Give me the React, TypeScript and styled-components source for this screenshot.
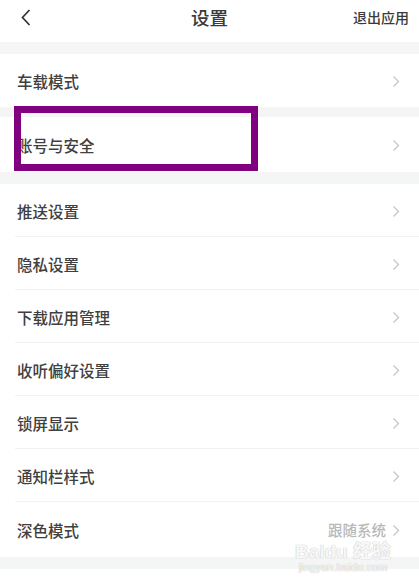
import React from 'react'
import styled, { createGlobalStyle } from 'styled-components'

const GlobalStyle = createGlobalStyle`
  html, body {
    margin: 0;
    padding: 0;
    background: #ffffff;
  }
  body {
    font-family: "Noto Sans CJK SC", "Noto Sans", sans-serif;
  }
`

const Page = styled.div`
  position: relative;
  width: 419px;
  height: 582px;
  overflow: hidden;
  background: #ffffff;
  display: flex;
  flex-direction: column;
`

const Header = styled.header`
  height: 42px;
  flex: none;
  box-sizing: border-box;
  display: flex;
  align-items: center;
  justify-content: space-between;
  padding: 0 10px 8px 21px;
  position: relative;
`

const Title = styled.h1`
  position: absolute;
  left: 0;
  right: 0;
  margin: 0;
  text-align: center;
  font-size: 18.5px;
  font-weight: 500;
  color: #3a3a3a;
  pointer-events: none;
`

const HeaderAction = styled.span`
  font-size: 14px;
  font-weight: 500;
  color: #3a3a3a;
`

const Band = styled.div<{ $h: number }>`
  flex: none;
  height: ${(p) => p.$h}px;
  background: #f4f5f5;
`

const Row = styled.div<{ $h: number; $divider?: boolean }>`
  position: relative;
  flex: none;
  height: ${(p) => p.$h}px;
  box-sizing: border-box;
  display: flex;
  align-items: center;
  padding: 1px 19px 0 17px;
  background: #ffffff;

  &::after {
    content: '';
    display: ${(p) => (p.$divider ? 'block' : 'none')};
    position: absolute;
    left: 15px;
    right: 0;
    bottom: 0;
    height: 1px;
    background: #f2f2f2;
  }
`

const Label = styled.span`
  flex: 1;
  font-size: 15.5px;
  font-weight: 500;
  color: #404040;
`

const Value = styled.span`
  font-size: 14.5px;
  line-height: 1;
  font-weight: 500;
  color: #b8b8b8;
  margin-right: 6px;
`

const Highlight = styled.div`
  position: absolute;
  left: 14px;
  top: -11px;
  width: 244px;
  height: 65px;
  box-sizing: border-box;
  border: 7px solid #800080;
  pointer-events: none;
`

const Watermark = styled.div`
  position: absolute;
  right: 28px;
  bottom: 9px;
  display: flex;
  flex-direction: column;
  align-items: center;
  color: rgba(255, 255, 255, 0.9);
  text-shadow: 0 0 1px #c4c4c4, 0 0 1px #c4c4c4;
  font-family: "Liberation Sans", "Noto Sans CJK SC", sans-serif;
  pointer-events: none;
`

const WatermarkBrand = styled.span`
  font-size: 19px;
  font-weight: 700;
  line-height: 18px;
`

const WatermarkUrl = styled.span`
  font-size: 11px;
  line-height: 12px;
`

const Chevron = () => (
  <svg width="8" height="13" viewBox="0 0 8 13">
    <polyline points="1.5,1.5 6.5,6.5 1.5,11.5" fill="none" stroke="#c4c4c4" strokeWidth="1.2" />
  </svg>
)

const BackIcon = () => (
  <svg width="10" height="17" viewBox="0 0 10 17">
    <polyline points="8.5,1 1.5,8.5 8.5,16" fill="none" stroke="#333333" strokeWidth="1.7" />
  </svg>
)

const groupItems = ['推送设置', '隐私设置', '下载应用管理', '收听偏好设置', '锁屏显示', '通知栏样式']

export default function App() {
  return (
    <Page>
      <GlobalStyle />
      <Header>
        <BackIcon />
        <Title>设置</Title>
        <HeaderAction>退出应用</HeaderAction>
      </Header>
      <Band $h={12} />
      <Row $h={53}>
        <Label>车载模式</Label>
        <Chevron />
      </Row>
      <Band $h={10} />
      <Row $h={55}>
        <Label>账号与安全</Label>
        <Chevron />
        <Highlight />
      </Row>
      <Band $h={12} />
      {groupItems.map((item) => (
        <Row key={item} $h={53} $divider>
          <Label>{item}</Label>
          <Chevron />
        </Row>
      ))}
      <Row $h={55}>
        <Label>深色模式</Label>
        <Value>跟随系统</Value>
        <Chevron />
      </Row>
      <Band $h={12} />
      <Watermark>
        <WatermarkBrand>Baidu 经验</WatermarkBrand>
        <WatermarkUrl>jingyan.baidu.com</WatermarkUrl>
      </Watermark>
    </Page>
  )
}
